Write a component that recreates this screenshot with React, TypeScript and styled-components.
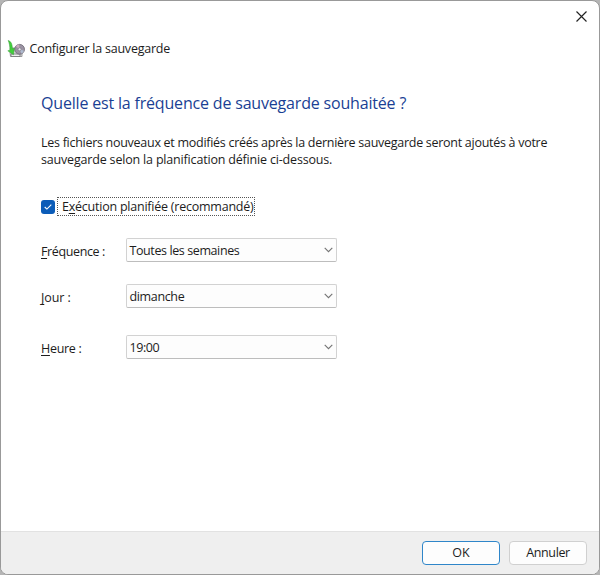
import React from "react";
import styled, { createGlobalStyle } from "styled-components";

const GlobalStyle = createGlobalStyle`
  * { box-sizing: border-box; }
  html, body { margin: 0; background: #b5b5b5; }
  body { font-family: "Open Sans", "Noto Sans", sans-serif; font-size: 12.5px; color: #1c1c1c; }
  button { font: inherit; color: inherit; }
`;

const Dialog = styled.main`
  width: 600px;
  height: 575px;
  display: flex;
  flex-direction: column;
  border: 1px solid #999;
  border-radius: 8px;
  background: #fff;
  overflow: hidden;
`;

const TitleBar = styled.div`
  height: 32px;
  display: flex;
  justify-content: flex-end;
`;

const CloseButton = styled.button`
  width: 36px;
  height: 30px;
  padding: 0;
  border: 0;
  background: none;
  display: grid;
  place-items: center;
`;

const Header = styled.header`
  height: 31px;
  padding-left: 6px;
  display: flex;
  align-items: center;
  gap: 4.5px;
`;

const Text = styled.span<{ $spacing?: number }>`
  white-space: nowrap;
  letter-spacing: ${(p) => p.$spacing ?? 0}px;
`;

const Content = styled.section`
  flex: 1;
  padding: 27px 40px 0;
`;

const Heading = styled.h1`
  margin: 0;
  height: 24px;
  line-height: 24px;
  font-size: 16px;
  font-weight: 400;
  color: #1a3f94;
`;

const Paragraph = styled.p`
  margin: 19px 0 0;
  line-height: 17px;
`;

const CheckRow = styled.label`
  display: flex;
  align-items: center;
  height: 19px;
  margin-top: 29px;
  gap: 2px;
`;

const CheckBox = styled.span`
  width: 14px;
  height: 14px;
  border-radius: 3px;
  background: #0b5cb8;
  display: grid;
  place-items: center;
`;

const FocusLabel = styled.span`
  width: 198px;
  height: 19px;
  line-height: 17px;
  padding-left: 4px;
  border: 1px dotted #555;
`;

const Field = styled.div<{ $gap: number }>`
  display: grid;
  grid-template-columns: 85px 211px;
  height: 24px;
  margin-top: ${(p) => p.$gap}px;
`;

const FieldLabel = styled.div`
  line-height: 27px;
`;

const Select = styled.div`
  height: 24px;
  padding: 0 3.5px 0 2.5px;
  display: flex;
  align-items: center;
  justify-content: space-between;
  border: 1px solid #d2d2d2;
  border-bottom-color: #bdbdbd;
  border-radius: 2px;
  background: #fdfdfd;
`;

const Footer = styled.footer`
  height: 43px;
  padding: 9px 12px 0 0;
  display: flex;
  justify-content: flex-end;
  gap: 9px;
  border-top: 1px solid #e2e2e2;
  background: #efefef;
`;

const ActionButton = styled.button<{ $primary?: boolean }>`
  width: 78px;
  height: 24px;
  padding: 0;
  line-height: 22px;
  border: 1px solid ${(p) => (p.$primary ? "#2f86c9" : "#d0d0d0")};
  border-radius: 4px;
  background: #fdfdfd;
`;

const Key = styled.u`
  text-underline-offset: 2px;
  text-decoration-thickness: 1px;
`;

const BackupIcon = () => (
  <svg width="18" height="18" viewBox="0 0 18 18">
    <path d="M3 12.5 5 8h8l2 5v3.5H3.5z" fill="#dededf" stroke="#8a8a8d" strokeWidth=".8" />
    <path d="M4 14h9v2.5H4z" fill="#f1f1f1" stroke="#707073" strokeWidth=".8" />
    <circle cx="12.6" cy="9.3" r="4.9" fill="#9b93a3" stroke="#6b6671" strokeWidth=".8" />
    <path d="M12.6 9.3 8.8 6.3a5 5 0 0 1 3.2-2z" fill="#c9a9bd" />
    <path d="M12.6 9.3l4.4 1.5a5 5 0 0 1-2.6 2.8z" fill="#aebbd0" />
    <circle cx="12.6" cy="9.3" r="1.5" fill="#e8e8ec" stroke="#706b77" strokeWidth=".6" />
    <path d="M1.2.4C4.2 1.3 5.4 4.2 5.4 8.8l2-.6-1 6.6-5.6-4 2-.5C3.1 6.3 2.2 3 1.2.4z" fill="#42cf3c" stroke="#359d35" strokeWidth=".5" />
  </svg>
);

const Chevron = () => (
  <svg width="9" height="6" viewBox="0 0 9 6" fill="none" stroke="#747474" strokeWidth="1.1">
    <path d="M.7.8 4.5 4.6 8.3.8" />
  </svg>
);

type FieldProps = { hotkey: string; rest: string; value: string; gap: number; labelSpacing: number; valueSpacing: number };

const SelectField = ({ hotkey, rest, value, gap, labelSpacing, valueSpacing }: FieldProps) => (
  <Field $gap={gap}>
    <FieldLabel><Text $spacing={labelSpacing}><Key>{hotkey}</Key>{rest}</Text></FieldLabel>
    <Select><Text $spacing={valueSpacing}>{value}</Text><Chevron /></Select>
  </Field>
);

export default function App() {
  return (
    <>
      <GlobalStyle />
      <Dialog>
        <TitleBar>
          <CloseButton aria-label="Fermer">
            <svg width="11" height="11" viewBox="0 0 11 11" stroke="#222" strokeWidth="1.15">
              <path d="m.5.5 10 10m0-10-10 10" />
            </svg>
          </CloseButton>
        </TitleBar>
        <Header><BackupIcon /><Text $spacing={-0.23}>Configurer la sauvegarde</Text></Header>
        <Content>
          <Heading><Text $spacing={-0.18}>Quelle est la fréquence de sauvegarde souhaitée ?</Text></Heading>
          <Paragraph>
            <Text $spacing={-0.28}>Les fichiers nouveaux et modifiés créés après la dernière sauvegarde seront ajoutés à votre</Text>
            <br />
            <Text $spacing={-0.18}>sauvegarde selon la planification définie ci-dessous.</Text>
          </Paragraph>
          <CheckRow>
            <CheckBox>
              <svg width="8" height="6" viewBox="0 0 8 6" fill="none" stroke="#fff" strokeWidth="1.1"><path d="m.7 3 2.2 2.1L7.3.7" /></svg>
            </CheckBox>
            <FocusLabel><Text $spacing={-0.23}>E<Key>x</Key>écution planifiée (recommandé)</Text></FocusLabel>
          </CheckRow>
          <SelectField hotkey="F" rest="réquence :" value="Toutes les semaines" gap={22} labelSpacing={-0.38} valueSpacing={-0.4} />
          <SelectField hotkey="J" rest="our :" value="dimanche" gap={22} labelSpacing={-0.1} valueSpacing={-0.35} />
          <SelectField hotkey="H" rest="eure :" value="19:00" gap={27} labelSpacing={-0.3} valueSpacing={-0.45} />
        </Content>
        <Footer>
          <ActionButton $primary><Text>OK</Text></ActionButton>
          <ActionButton><Text $spacing={-0.35}>Annuler</Text></ActionButton>
        </Footer>
      </Dialog>
    </>
  );
}
